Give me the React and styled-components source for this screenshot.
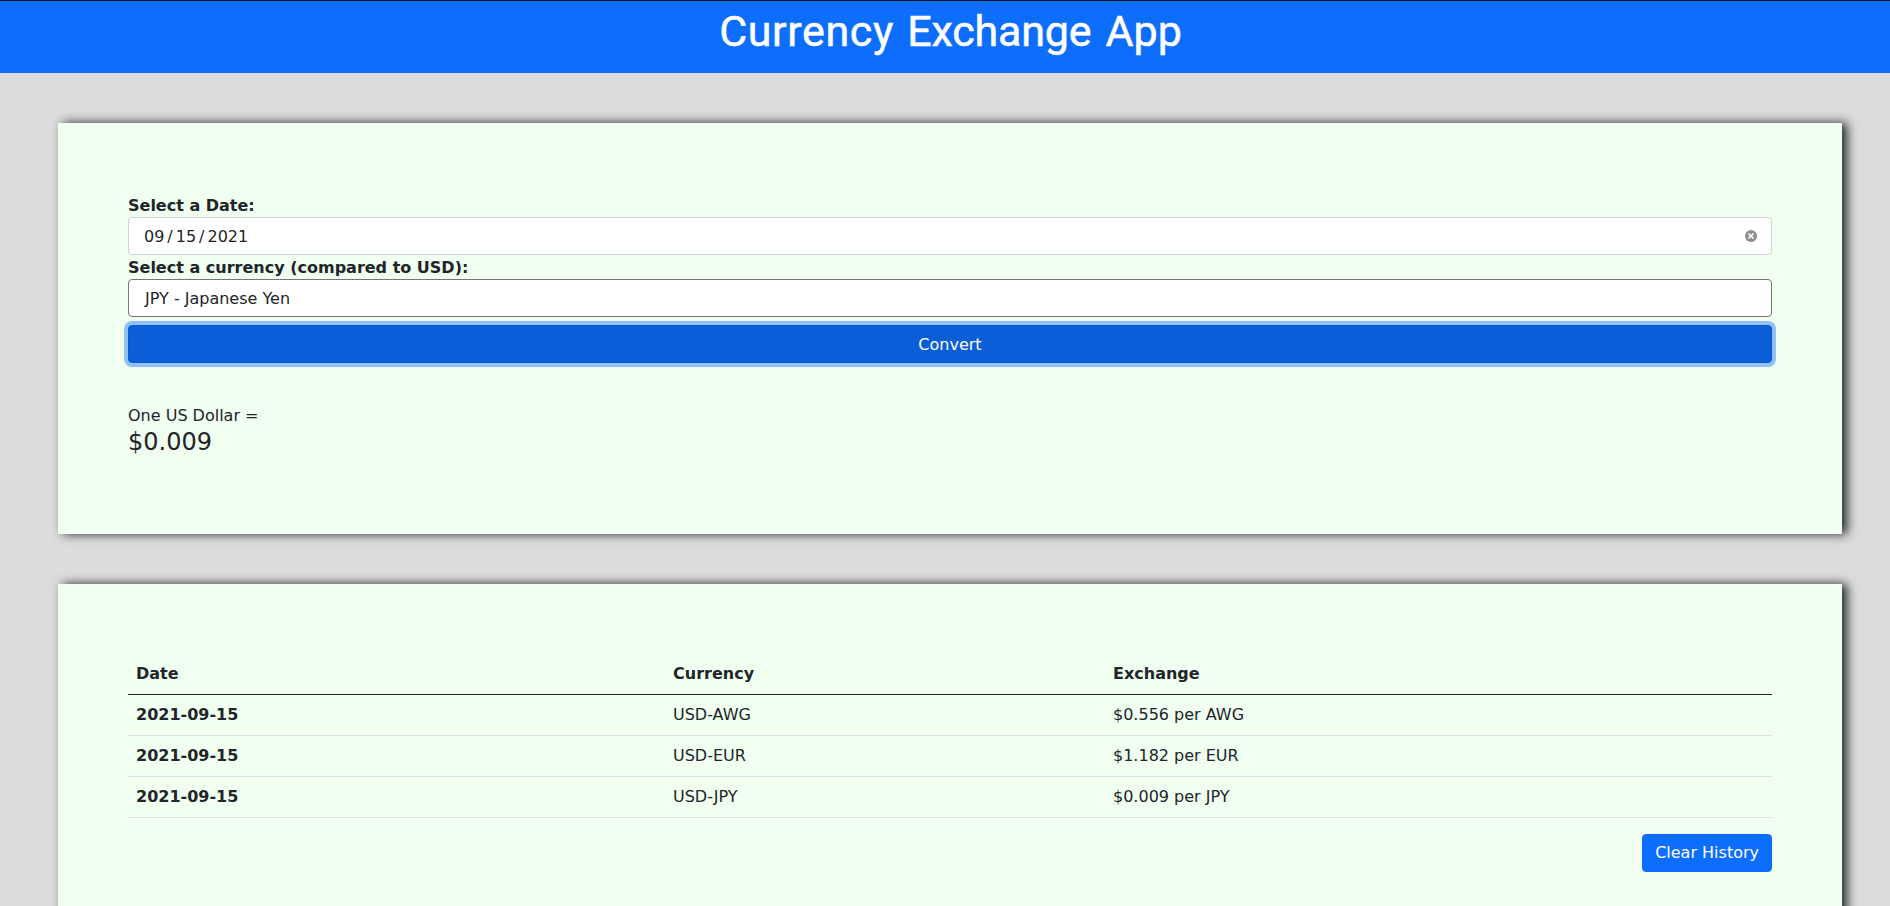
import React from 'react';
import styled, { createGlobalStyle, css } from 'styled-components';

const GlobalStyle = createGlobalStyle`
  *, *::before, *::after { box-sizing: border-box; }
  body {
    margin: 0;
    background: #dcdcdc;
    color: #212529;
    font: 400 16px/1.5 "DejaVu Sans", sans-serif;
  }
`;

const Page = styled.div`
  height: 100vh;
  overflow: hidden;
`;

const Header = styled.header`
  height: 73px;
  border-top: 1px solid #0c1220;
  background: #0d6efd;
  color: #fff;
`;

const Title = styled.h1`
  display: flex;
  justify-content: center;
  gap: 14px;
  margin: 0;
  padding: 4px 0 0 11px;
  font: 400 43px/52px Roboto, sans-serif;
  -webkit-text-stroke: 0.5px #fff;
`;

const Word = styled.span`
  letter-spacing: ${(p) => p.$spacing}px;
  margin-right: ${(p) => -p.$spacing}px;
`;

const Card = styled.section`
  margin: 50px 48px 0 58px;
  width: 1784px;
  padding: 70px;
  background: #f0fff0;
  box-shadow: 5px 0 10px #212529;
`;

const Label = styled.label`
  display: block;
  height: 24px;
  font-weight: 700;
  line-height: 26px;
`;

const Field = styled.div`
  display: flex;
  align-items: center;
  height: 38px;
  padding: 2px 15px 0 ${(p) => p.$indent}px;
  border: 1px solid ${(p) => p.$border};
  border-radius: 4px;
  background: #fff;
`;

const DateParts = styled.div`
  display: flex;
  gap: 3px;
  flex: 1;
`;

const ClearIcon = styled.svg`
  width: 12px;
  height: 12px;
  margin: 0 -1px 2px 0;
`;

const Button = styled.button`
  display: block;
  height: 38px;
  padding: 0 12px;
  border: 1px solid #0d6efd;
  border-radius: 4px;
  background: #0d6efd;
  color: #fff;
  font: inherit;
  ${(p) =>
    p.$focused &&
    css`
      width: 100%;
      margin-top: 8px;
      padding-top: 2px;
      border-color: #0a58ca;
      background: #0b5ed7;
      box-shadow: 0 0 0 4px rgba(49, 132, 253, 0.5);
    `}
`;

const Result = styled.div`
  margin-top: 41px;
`;

const Amount = styled.h4`
  margin: 0 0 7px;
  font-size: 24px;
  font-weight: 500;
  line-height: 29px;
`;

const Table = styled.table`
  width: 100%;
  table-layout: fixed;
  border-collapse: separate;
  border-spacing: 0;
  margin-bottom: 16px;
`;

const Cell = styled.td`
  padding: 8px;
  text-align: left;
  border-bottom: 1px solid ${(p) => (p.$head ? '#212529' : '#dee2e6')};
`;

const Column = styled.col`
  width: ${(p) => p.$width};
`;

const Actions = styled.div`
  display: flex;
  justify-content: flex-end;
`;

const history = [
  ['2021-09-15', 'USD-AWG', '$0.556 per AWG'],
  ['2021-09-15', 'USD-EUR', '$1.182 per EUR'],
  ['2021-09-15', 'USD-JPY', '$0.009 per JPY'],
];

export default function App() {
  return (
    <Page>
      <GlobalStyle />
      <Header>
        <Title>
          <Word $spacing={0.6}>Currency</Word>
          <Word $spacing={-0.2}>Exchange</Word>
          <Word $spacing={0}>App</Word>
        </Title>
      </Header>
      <Card>
        <Label>Select a Date:</Label>
        <Field $border="#ced4da" $indent={15}>
          <DateParts>
            <span>09</span>
            <span>/</span>
            <span>15</span>
            <span>/</span>
            <span>2021</span>
          </DateParts>
          <ClearIcon viewBox="0 0 12 12">
            <circle cx="6" cy="6" r="6" fill="#8f8f90" />
            <path d="M3.5 3.5 8.5 8.5M8.5 3.5 3.5 8.5" stroke="#fff" strokeWidth="1.7" />
          </ClearIcon>
        </Field>
        <Label>Select a currency (compared to USD):</Label>
        <Field $border="#767676" $indent={16}>JPY - Japanese Yen</Field>
        <Button $focused>Convert</Button>
        <Result>
          <div>One US Dollar =</div>
          <Amount>$0.009</Amount>
        </Result>
      </Card>
      <Card>
        <Table>
          <colgroup>
            <Column $width="537px" />
            <Column $width="440px" />
            <Column $width="auto" />
          </colgroup>
          <thead>
            <tr>
              <Cell as="th" $head>Date</Cell>
              <Cell as="th" $head>Currency</Cell>
              <Cell as="th" $head>Exchange</Cell>
            </tr>
          </thead>
          <tbody>
            {history.map(([date, currency, rate]) => (
              <tr key={currency}>
                <Cell as="th">{date}</Cell>
                <Cell>{currency}</Cell>
                <Cell>{rate}</Cell>
              </tr>
            ))}
          </tbody>
        </Table>
        <Actions>
          <Button>Clear History</Button>
        </Actions>
      </Card>
    </Page>
  );
}
